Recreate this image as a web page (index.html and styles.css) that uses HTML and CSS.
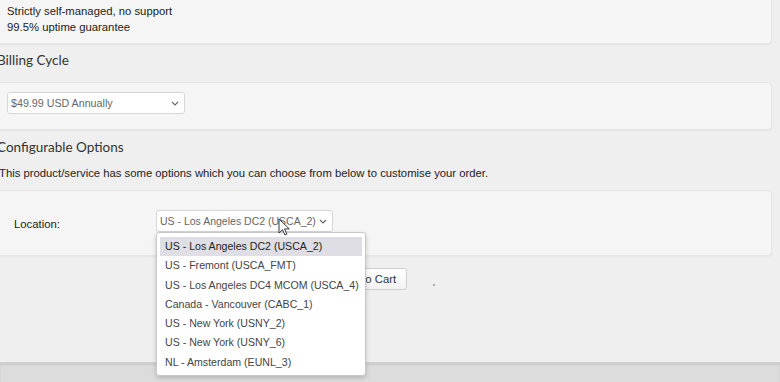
FILE: index.html
```html
<!DOCTYPE html>
<html lang="en">
<head>
    <meta charset="UTF-8">
    <meta name="viewport" content="width=device-width, initial-scale=1.0">
    <title>Configure Product</title>
    <link rel="stylesheet" href="styles.css">
</head>
<body>

<div class="main">
    <div class="panel panel-features">
        <div>Strictly self-managed, no support</div>
        <div>99.5% uptime guarantee</div>
    </div>

    <h3 class="section-title">Billing Cycle</h3>
    <div class="panel panel-billing">
        <div class="fake-select billing-select">
            <span>$49.99 USD Annually</span>
            <svg class="chevron" width="8" height="5" viewBox="0 0 8 5"><path d="M1 1l3 3 3-3" fill="none" stroke="#666" stroke-width="1.1"/></svg>
        </div>
    </div>

    <h3 class="section-title title-options">Configurable Options</h3>
    <p class="intro">This product/service has some options which you can choose from below to customise your order.</p>
    <div class="panel panel-options">
        <label class="option-label">Location:</label>
        <div class="fake-select location-select">
            <span>US - Los Angeles DC2 (USCA_2)</span>
            <svg class="chevron" width="8" height="5" viewBox="0 0 8 5"><path d="M1 1l3 3 3-3" fill="none" stroke="#666" stroke-width="1.1"/></svg>
            <ul class="dropdown">
                <li class="active">US - Los Angeles DC2 (USCA_2)</li>
                <li>US - Fremont (USCA_FMT)</li>
                <li>US - Los Angeles DC4 MCOM (USCA_4)</li>
                <li>Canada - Vancouver (CABC_1)</li>
                <li>US - New York (USNY_2)</li>
                <li>US - New York (USNY_6)</li>
                <li>NL - Amsterdam (EUNL_3)</li>
            </ul>
            <svg class="cursor" width="12" height="18" viewBox="0 0 12 18"><path d="M1 1v14l3.5-3.3 2.4 5.3 2-0.9-2.4-5.2h4.8z" fill="#fff" stroke="#222" stroke-width="0.9"/></svg>
        </div>
    </div>

    <div class="actions">
        <button class="btn-cart">Add to Cart</button>
        <span class="loader-dot"></span>
    </div>
</div>

<div class="footer"></div>

</body>
</html>
```

FILE: styles.css
```css
body {
    margin: 0;
    padding: 0;
    height: 382px;
    overflow: hidden;
    background-color: #efefef;
    font-family: "Liberation Sans", Arial, sans-serif;
    font-size: 11.3px;
    color: #222;
}
.main {
    margin-left: -4px;
    width: 776px;
    height: 362px;
}
.panel {
    background: #f5f5f5;
    border: 1px solid #e6e6e6;
    border-radius: 4px;
    box-shadow: 0 1px 2px rgba(0, 0, 0, 0.05);
    box-sizing: border-box;
}
.panel-features {
    height: 44px;
    padding: 3px 10px 0;
    line-height: 16px;
    border-top: none;
    border-radius: 0 0 4px 4px;
}
.section-title {
    font-family: Lato, "Open Sans", sans-serif;
    font-weight: normal;
    font-size: 13.5px;
    line-height: 20px;
    color: #333;
    margin: 6px 0 12px 1px;
}
.title-options {
    margin-top: 7px;
    margin-bottom: 8px;
}
.panel-billing {
    height: 48px;
    padding: 9px 10px;
}
.fake-select {
    position: relative;
    display: flex;
    align-items: center;
    justify-content: space-between;
    box-sizing: border-box;
    height: 22px;
    padding: 0 5px 0 3px;
    background: #fff;
    border: 1px solid #d6d6d6;
    border-radius: 3px;
    font-size: 10.7px;
    color: #666;
    white-space: nowrap;
}
.billing-select {
    width: 178px;
}
.intro {
    margin: 0 0 9px 3px;
    line-height: 16px;
}
.panel-options {
    display: flex;
    align-items: flex-start;
    height: 66px;
    padding: 19px 17px 0;
}
.option-label {
    width: 142px;
    margin-top: 6px;
    line-height: 16px;
    color: #222;
}
.location-select {
    width: 177px;
    font-size: 10.5px;
}
.dropdown {
    position: absolute;
    top: 21px;
    left: -1px;
    width: 210px;
    box-sizing: border-box;
    margin: 0;
    padding: 4px 3px 3px;
    list-style: none;
    background: #fff;
    border: 1px solid #c8c8c8;
    border-radius: 3px;
    box-shadow: 0 2px 5px rgba(0, 0, 0, 0.18);
    z-index: 2;
}
.dropdown li {
    height: 19.3px;
    line-height: 19.3px;
    padding-left: 5px;
    font-size: 10.6px;
    color: #444;
}
.dropdown li.active {
    background: #dedee4;
    color: #222;
}
.cursor {
    position: absolute;
    left: 121px;
    top: 7px;
    z-index: 3;
}
.actions {
    display: flex;
    align-items: center;
    margin-top: 12px;
    padding-left: 332px;
}
.btn-cart {
    width: 79px;
    height: 22px;
    padding: 0;
    font-family: "Liberation Sans", Arial, sans-serif;
    font-size: 11.3px;
    color: #333;
    background: linear-gradient(#ffffff, #f3f3f3);
    border: 1px solid #cfcfcf;
    border-radius: 3px;
}
.loader-dot {
    width: 2px;
    height: 2px;
    margin: 12px 0 0 26px;
    background: #aaa;
}
.footer {
    height: 20px;
    background: #dcdcdc;
    box-shadow: inset 0 2px 2px rgba(0, 0, 0, 0.08);
    border-top: 1px solid #d2d2d2;
}
```
